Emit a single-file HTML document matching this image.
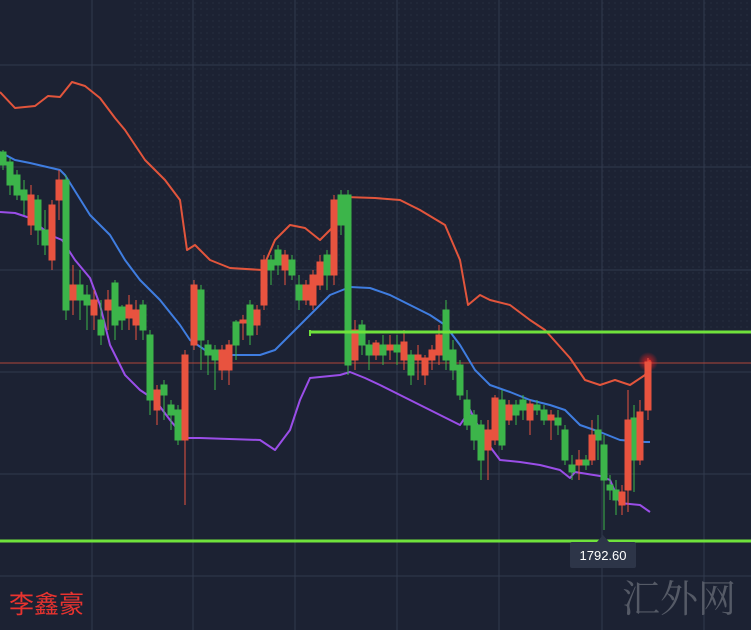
<!DOCTYPE html>
<html><head><meta charset="utf-8"><style>
html,body{margin:0;padding:0;background:#1c2233;width:751px;height:630px;overflow:hidden}
svg{display:block}
</style></head><body>
<svg width="751" height="630" viewBox="0 0 751 630" xmlns="http://www.w3.org/2000/svg">
<defs>
<pattern id="dots" width="6" height="6" patternUnits="userSpaceOnUse"><circle cx="3" cy="3" r="1" fill="#262d40"/></pattern>
<radialGradient id="glow"><stop offset="0" stop-color="#ff2020" stop-opacity="0.8"/><stop offset="1" stop-color="#ff2020" stop-opacity="0"/></radialGradient>
</defs>
<rect width="751" height="630" fill="#1c2233"/>
<rect x="130" y="0" width="621" height="330" fill="url(#dots)" opacity="0.6"/>
<g stroke="#313a4e" stroke-width="1">
<line x1="92" y1="0" x2="92" y2="630"/><line x1="193" y1="0" x2="193" y2="630"/><line x1="295" y1="0" x2="295" y2="630"/><line x1="397" y1="0" x2="397" y2="630"/><line x1="499" y1="0" x2="499" y2="630"/><line x1="602" y1="0" x2="602" y2="630"/><line x1="704" y1="0" x2="704" y2="630"/>
<line x1="0" y1="65" x2="751" y2="65"/><line x1="0" y1="167" x2="751" y2="167"/><line x1="0" y1="270" x2="751" y2="270"/><line x1="0" y1="372" x2="751" y2="372"/><line x1="0" y1="474" x2="751" y2="474"/><line x1="0" y1="576" x2="751" y2="576"/>
</g>
<line x1="0" y1="363" x2="751" y2="363" stroke="#b0453a" stroke-width="1"/>
<g fill="none" stroke-width="2" stroke-linejoin="round">
<polyline stroke="#e2553c" points="0,92 15,108 35,106 48,96 60,97 72,82 85,86 100,98 115,118 125,130 145,160 165,180 180,200 187,250 195,245 210,260 230,268 262,270 275,240 290,225 305,228 320,240 335,225 345,197 375,198 400,200 420,210 445,225 460,260 468,305 480,295 490,300 510,305 530,320 545,330 570,358 585,380 600,385 615,380 630,385 645,375 650,360"/>
<polyline stroke="#3f7de0" points="0,152 15,160 30,163 60,170 65,175 90,215 110,235 125,260 140,280 160,300 180,325 190,340 205,350 220,355 260,355 275,350 290,335 310,315 330,295 350,287 370,288 390,295 410,305 430,315 445,325 460,345 475,370 490,385 510,392 530,400 550,405 565,410 580,425 600,432 620,440 645,442 650,442"/>
<polyline stroke="#9a4ee8" points="0,212 15,213 30,218 50,235 62,240 75,260 90,278 100,305 110,345 125,375 140,390 155,400 170,420 185,438 200,438 260,440 275,450 290,430 300,400 310,378 340,375 350,372 365,378 380,385 400,395 420,405 440,415 460,425 470,410 485,440 500,460 520,462 540,465 560,470 570,478 575,472 600,476 610,480 620,503 640,505 650,512"/>
</g>
<g id="c"></g>
<circle cx="648" cy="362" r="10" fill="url(#glow)"/>
<g stroke-width="1">
<!-- candles -->
<g stroke="#3cb54a" fill="#3cb54a">
<line x1="3" y1="150" x2="3" y2="170"/><rect x="0" y="152" width="6" height="13"/>
<line x1="10" y1="158" x2="10" y2="195"/><rect x="7" y="162" width="6" height="23"/>
<line x1="17" y1="170" x2="17" y2="200"/><rect x="14" y="175" width="6" height="20"/>
<line x1="24" y1="180" x2="24" y2="215"/><rect x="21" y="190" width="6" height="10"/>
<line x1="38" y1="195" x2="38" y2="245"/><rect x="35" y="200" width="6" height="30"/>
<line x1="45" y1="210" x2="45" y2="255"/><rect x="42" y="230" width="6" height="15"/>
<line x1="66" y1="175" x2="66" y2="320"/><rect x="63" y="180" width="6" height="130"/>
<line x1="80" y1="270" x2="80" y2="320"/><rect x="77" y="285" width="6" height="15"/>
<line x1="87" y1="285" x2="87" y2="330"/><rect x="84" y="295" width="6" height="10"/>
<line x1="101" y1="300" x2="101" y2="345"/><rect x="98" y="320" width="6" height="15"/>
<line x1="115" y1="280" x2="115" y2="340"/><rect x="112" y="283" width="6" height="42"/>
<line x1="122" y1="305" x2="122" y2="330"/><rect x="119" y="307" width="6" height="13"/>
<line x1="143" y1="300" x2="143" y2="340"/><rect x="140" y="305" width="6" height="25"/>
<line x1="150" y1="330" x2="150" y2="415"/><rect x="147" y="335" width="6" height="65"/>
<line x1="164" y1="380" x2="164" y2="420"/><rect x="161" y="385" width="6" height="10"/>
<line x1="171" y1="400" x2="171" y2="430"/><rect x="168" y="405" width="6" height="10"/>
<line x1="178" y1="405" x2="178" y2="445"/><rect x="175" y="410" width="6" height="30"/>
<line x1="201" y1="285" x2="201" y2="370"/><rect x="198" y="290" width="6" height="50"/>
<line x1="208" y1="340" x2="208" y2="375"/><rect x="205" y="345" width="6" height="10"/>
<line x1="215" y1="345" x2="215" y2="390"/><rect x="212" y="350" width="6" height="10"/>
<line x1="236" y1="320" x2="236" y2="360"/><rect x="233" y="322" width="6" height="23"/>
<line x1="250" y1="300" x2="250" y2="345"/><rect x="247" y="305" width="6" height="30"/>
<line x1="271" y1="255" x2="271" y2="285"/><rect x="268" y="260" width="6" height="10"/>
<line x1="278" y1="245" x2="278" y2="275"/><rect x="275" y="250" width="6" height="15"/>
<line x1="292" y1="255" x2="292" y2="280"/><rect x="289" y="260" width="6" height="15"/>
<line x1="299" y1="275" x2="299" y2="310"/><rect x="296" y="285" width="6" height="15"/>
<line x1="327" y1="250" x2="327" y2="290"/><rect x="324" y="255" width="6" height="20"/>
<line x1="341" y1="190" x2="341" y2="235"/><rect x="338" y="195" width="6" height="30"/>
<line x1="348" y1="190" x2="348" y2="375"/><rect x="345" y="195" width="6" height="170"/>
<line x1="362" y1="320" x2="362" y2="355"/><rect x="359" y="325" width="6" height="20"/>
<line x1="369" y1="340" x2="369" y2="370"/><rect x="366" y="345" width="6" height="10"/>
<line x1="383" y1="335" x2="383" y2="365"/><rect x="380" y="345" width="6" height="10"/>
<line x1="397" y1="335" x2="397" y2="365"/><rect x="394" y="345" width="6" height="7"/>
<line x1="411" y1="350" x2="411" y2="385"/><rect x="408" y="355" width="6" height="20"/>
<line x1="446" y1="300" x2="446" y2="370"/><rect x="443" y="310" width="6" height="50"/>
<line x1="453" y1="340" x2="453" y2="380"/><rect x="450" y="350" width="6" height="20"/>
<line x1="460" y1="360" x2="460" y2="400"/><rect x="457" y="365" width="6" height="30"/>
<line x1="467" y1="390" x2="467" y2="430"/><rect x="464" y="400" width="6" height="25"/>
<line x1="474" y1="410" x2="474" y2="450"/><rect x="471" y="415" width="6" height="25"/>
<line x1="481" y1="420" x2="481" y2="480"/><rect x="478" y="425" width="6" height="35"/>
<line x1="502" y1="390" x2="502" y2="450"/><rect x="499" y="400" width="6" height="45"/>
<line x1="516" y1="400" x2="516" y2="425"/><rect x="513" y="405" width="6" height="10"/>
<line x1="523" y1="395" x2="523" y2="420"/><rect x="520" y="400" width="6" height="10"/>
<line x1="537" y1="400" x2="537" y2="415"/><rect x="534" y="405" width="6" height="5"/>
<line x1="544" y1="405" x2="544" y2="425"/><rect x="541" y="410" width="6" height="10"/>
<line x1="558" y1="410" x2="558" y2="435"/><rect x="555" y="418" width="6" height="7"/>
<line x1="565" y1="425" x2="565" y2="465"/><rect x="562" y="430" width="6" height="30"/>
<line x1="572" y1="455" x2="572" y2="480"/><rect x="569" y="465" width="6" height="7"/>
<line x1="586" y1="455" x2="586" y2="470"/><rect x="583" y="460" width="6" height="5"/>
<line x1="598" y1="415" x2="598" y2="460"/><rect x="595" y="430" width="6" height="10"/>
<line x1="604" y1="435" x2="604" y2="530"/><rect x="601" y="445" width="6" height="35"/>
<line x1="610" y1="475" x2="610" y2="500"/><rect x="607" y="485" width="6" height="5"/>
<line x1="616" y1="480" x2="616" y2="515"/><rect x="613" y="490" width="6" height="10"/>
<line x1="634" y1="405" x2="634" y2="492"/><rect x="631" y="418" width="6" height="42"/>
</g>
<g stroke="#e8533f" fill="#e8533f">
<line x1="31" y1="185" x2="31" y2="235"/><rect x="28" y="195" width="6" height="30"/>
<line x1="52" y1="200" x2="52" y2="270"/><rect x="49" y="205" width="6" height="55"/>
<line x1="59" y1="170" x2="59" y2="220"/><rect x="56" y="180" width="6" height="20"/>
<line x1="73" y1="265" x2="73" y2="315"/><rect x="70" y="285" width="6" height="15"/>
<line x1="94" y1="290" x2="94" y2="330"/><rect x="91" y="300" width="6" height="15"/>
<line x1="108" y1="290" x2="108" y2="330"/><rect x="105" y="300" width="6" height="10"/>
<line x1="129" y1="295" x2="129" y2="330"/><rect x="126" y="305" width="6" height="13"/>
<line x1="136" y1="300" x2="136" y2="340"/><rect x="133" y="310" width="6" height="15"/>
<line x1="157" y1="385" x2="157" y2="425"/><rect x="154" y="390" width="6" height="20"/>
<line x1="185" y1="350" x2="185" y2="505"/><rect x="182" y="355" width="6" height="85"/>
<line x1="194" y1="280" x2="194" y2="350"/><rect x="191" y="285" width="6" height="60"/>
<line x1="222" y1="345" x2="222" y2="380"/><rect x="219" y="350" width="6" height="20"/>
<line x1="229" y1="340" x2="229" y2="385"/><rect x="226" y="345" width="6" height="25"/>
<line x1="243" y1="315" x2="243" y2="340"/><rect x="240" y="320" width="6" height="3"/>
<line x1="257" y1="305" x2="257" y2="335"/><rect x="254" y="310" width="6" height="15"/>
<line x1="264" y1="255" x2="264" y2="310"/><rect x="261" y="260" width="6" height="45"/>
<line x1="285" y1="250" x2="285" y2="285"/><rect x="282" y="255" width="6" height="15"/>
<line x1="306" y1="280" x2="306" y2="305"/><rect x="303" y="285" width="6" height="15"/>
<line x1="313" y1="270" x2="313" y2="310"/><rect x="310" y="275" width="6" height="30"/>
<line x1="320" y1="255" x2="320" y2="290"/><rect x="317" y="262" width="6" height="23"/>
<line x1="334" y1="195" x2="334" y2="285"/><rect x="331" y="200" width="6" height="75"/>
<line x1="355" y1="320" x2="355" y2="370"/><rect x="352" y="330" width="6" height="30"/>
<line x1="376" y1="340" x2="376" y2="360"/><rect x="373" y="343" width="6" height="12"/>
<line x1="390" y1="335" x2="390" y2="360"/><rect x="387" y="345" width="6" height="5"/>
<line x1="404" y1="330" x2="404" y2="370"/><rect x="401" y="342" width="6" height="18"/>
<line x1="418" y1="345" x2="418" y2="380"/><rect x="415" y="355" width="6" height="5"/>
<line x1="425" y1="355" x2="425" y2="385"/><rect x="422" y="358" width="6" height="17"/>
<line x1="432" y1="345" x2="432" y2="370"/><rect x="429" y="350" width="6" height="10"/>
<line x1="439" y1="325" x2="439" y2="365"/><rect x="436" y="335" width="6" height="20"/>
<line x1="488" y1="420" x2="488" y2="480"/><rect x="485" y="430" width="6" height="20"/>
<line x1="495" y1="395" x2="495" y2="445"/><rect x="492" y="398" width="6" height="42"/>
<line x1="509" y1="400" x2="509" y2="425"/><rect x="506" y="405" width="6" height="15"/>
<line x1="530" y1="400" x2="530" y2="435"/><rect x="527" y="404" width="6" height="16"/>
<line x1="551" y1="410" x2="551" y2="440"/><rect x="548" y="415" width="6" height="5"/>
<line x1="579" y1="450" x2="579" y2="480"/><rect x="576" y="460" width="6" height="5"/>
<line x1="592" y1="420" x2="592" y2="465"/><rect x="589" y="435" width="6" height="25"/>
<line x1="622" y1="485" x2="622" y2="515"/><rect x="619" y="492" width="6" height="13"/>
<line x1="628" y1="390" x2="628" y2="512"/><rect x="625" y="420" width="6" height="70"/>
<line x1="640" y1="400" x2="640" y2="465"/><rect x="637" y="412" width="6" height="48"/>
<line x1="648" y1="358" x2="648" y2="420"/><rect x="645" y="362" width="6" height="48"/>
</g>
</g>
<line x1="310" y1="332" x2="751" y2="332" stroke="#6fe23c" stroke-width="3"/>
<line x1="310" y1="330" x2="310" y2="336" stroke="#6fe23c" stroke-width="2"/>
<line x1="0" y1="541" x2="751" y2="541" stroke="#6fe23c" stroke-width="3"/>
<polygon points="597,542 603,535 609,542" fill="#2d3548"/>
<rect x="570" y="542" width="66" height="26" rx="2" fill="#2d3548"/>
<text x="603" y="560" text-anchor="middle" font-family="Liberation Sans, sans-serif" font-size="13" fill="#ffffff">1792.60</text>
<text x="9" y="613" font-family="Liberation Sans, 'Noto Sans CJK SC', sans-serif" font-size="25" fill="#e8332f">李鑫豪</text>
<text x="622" y="612" font-family="'Noto Serif CJK SC', serif" font-size="38" fill="#5f6470" opacity="0.85">汇外网</text>
</svg>
</body></html>
